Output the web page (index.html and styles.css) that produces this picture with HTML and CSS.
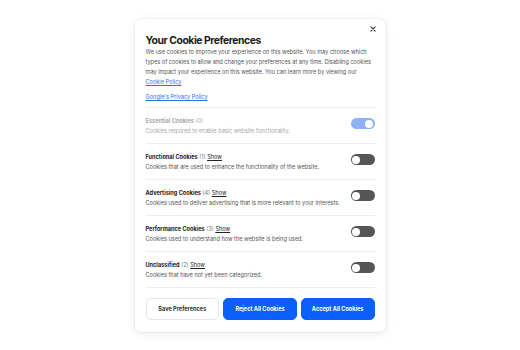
FILE: index.html
```html
<!DOCTYPE html>
<html>
<head>
<meta charset="utf-8">
<link rel="stylesheet" href="styles.css">
</head>
<body>
<div class="card">
  <button class="close" aria-label="Close">
    <svg width="6" height="6" viewBox="0 0 10 10"><path d="M1.5 1.5L8.5 8.5M8.5 1.5L1.5 8.5" stroke="#333" stroke-width="1.9" stroke-linecap="round"/></svg>
  </button>
  <h1 class="title">Your Cookie Preferences</h1>
  <p class="intro">We use cookies to improve your experience on this website. You may choose which types of cookies to allow and change your preferences at any time. Disabling cookies may impact your experience on this website. You can learn more by viewing our <a href="#">Cookie Policy</a></p>
  <p class="privacy"><a href="#">Google's Privacy Policy</a></p>
  <div class="rows">
    <div class="row disabled">
      <div class="info">
        <div class="label"><b>Essential Cookies</b> <span class="count">(0)</span></div>
        <div class="desc">Cookies required to enable basic website functionality.</div>
      </div>
      <span class="toggle on"></span>
    </div>
    <div class="row">
      <div class="info">
        <div class="label"><b>Functional Cookies</b> <span class="count">(1)</span> <a class="show" href="#">Show</a></div>
        <div class="desc">Cookies that are used to enhance the functionality of the website.</div>
      </div>
      <span class="toggle"></span>
    </div>
    <div class="row">
      <div class="info">
        <div class="label"><b>Advertising Cookies</b> <span class="count">(4)</span> <a class="show" href="#">Show</a></div>
        <div class="desc">Cookies used to deliver advertising that is more relevant to your interests.</div>
      </div>
      <span class="toggle"></span>
    </div>
    <div class="row">
      <div class="info">
        <div class="label"><b>Performance Cookies</b> <span class="count">(3)</span> <a class="show" href="#">Show</a></div>
        <div class="desc">Cookies used to understand how the website is being used.</div>
      </div>
      <span class="toggle"></span>
    </div>
    <div class="row">
      <div class="info">
        <div class="label"><b>Unclassified</b> <span class="count">(2)</span> <a class="show" href="#">Show</a></div>
        <div class="desc">Cookies that have not yet been categorized.</div>
      </div>
      <span class="toggle"></span>
    </div>
  </div>
  <div class="actions">
    <button class="btn btn-outline">Save Preferences</button>
    <button class="btn btn-primary">Reject All Cookies</button>
    <button class="btn btn-primary">Accept All Cookies</button>
  </div>
</div>
</body>
</html>
```
FILE: styles.css
```css
* { box-sizing: border-box; }
html, body { margin: 0; padding: 0; }
body {
  width: 520px;
  height: 350px;
  background: #ffffff;
  font-family: Inter, "Noto Sans", "Liberation Sans", sans-serif;
  display: flex;
  align-items: center;
  justify-content: center;
}
.card {
  position: relative;
  width: 251px;
  height: 313px;
  margin-top: 1px;
  background: #fff;
  border-radius: 7px;
  box-shadow: 0 0 0 1px rgba(0,0,0,0.03), 0 2px 10px rgba(0,0,0,0.08);
  padding: 16px 11px 13px 11px;
}
.close {
  position: absolute;
  top: 4px;
  right: 7px;
  width: 11px;
  height: 11px;
  border: 0;
  background: none;
  padding: 0;
  display: flex;
  align-items: center;
  justify-content: center;
}
.title {
  margin: 0;
  font-size: 10.4px;
  line-height: 12px;
  font-weight: 700;
  color: #1c1c1c;
  letter-spacing: -0.45px;
}
.intro {
  margin: 0;
  font-size: 5.6px;
  line-height: 10px;
  color: #555;
}
.intro a, .privacy a {
  color: #2f6fe4;
  text-decoration: underline;
}
.privacy {
  margin: 5px 0 5px 0;
  font-size: 5.6px;
  line-height: 10px;
}
.rows { border-top: 1px solid #eeeeee; }
.row {
  display: flex;
  align-items: center;
  justify-content: space-between;
  height: 36px;
  border-bottom: 1px solid #eeeeee;
  padding-top: 1px;
}
.label {
  font-size: 5.6px;
  line-height: 10px;
  color: #222;
}
.label b { font-weight: 700; }
.count { color: #777; }
.show { color: #222; text-decoration: underline; }
.desc {
  font-size: 5.6px;
  line-height: 10px;
  color: #555;
}
.disabled .label, .disabled .label b, .disabled .count, .disabled .desc { color: #a8a8a8; }
.toggle {
  position: relative;
  width: 24px;
  height: 11px;
  border-radius: 6px;
  background: #555555;
  margin-top: -5px;
  flex: none;
}
.toggle::after {
  content: "";
  position: absolute;
  top: 1.5px;
  left: 1.5px;
  width: 8px;
  height: 8px;
  border-radius: 50%;
  background: #fff;
}
.toggle.on { background: #8fb1f6; }
.toggle.on::after { left: auto; right: 1.5px; }
.actions {
  display: flex;
  gap: 4px;
  margin-top: 10px;
}
.btn {
  flex: 1;
  height: 22px;
  border-radius: 5px;
  font-family: inherit;
  font-size: 5.6px;
  font-weight: 700;
  padding: 0;
}
.btn-outline {
  background: #fff;
  border: 1px solid #e2e6ee;
  color: #333;
}
.btn-primary {
  background: #0b5ffb;
  border: 1px solid #0b5ffb;
  color: #fff;
}
```
